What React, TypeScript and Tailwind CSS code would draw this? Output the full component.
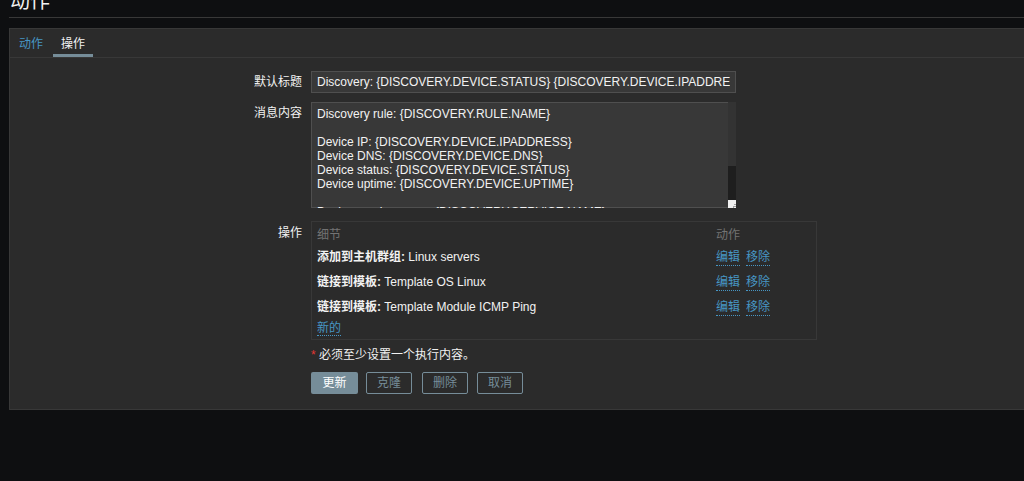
const FONT = "font-['Liberation_Sans','Noto_Sans_CJK_SC',sans-serif]";

const MESSAGE = [
  'Discovery rule: {DISCOVERY.RULE.NAME}',
  '',
  'Device IP: {DISCOVERY.DEVICE.IPADDRESS}',
  'Device DNS: {DISCOVERY.DEVICE.DNS}',
  'Device status: {DISCOVERY.DEVICE.STATUS}',
  'Device uptime: {DISCOVERY.DEVICE.UPTIME}',
  '',
  'Device service name: {DISCOVERY.SERVICE.NAME}',
  'Device service port: {DISCOVERY.SERVICE.PORT}',
];

const OPERATIONS = [
  { type: '添加到主机群组', value: 'Linux servers' },
  { type: '链接到模板', value: 'Template OS Linux' },
  { type: '链接到模板', value: 'Template Module ICMP Ping' },
];

function Link({ children }: { children: React.ReactNode }) {
  return (
    <span className="text-[#4796c4] border-b border-dotted border-[#4796c4] leading-[15px] cursor-pointer">
      {children}
    </span>
  );
}

function FormRow({ label, children, labelPad = 'pt-[4px]' }: { label: string; children: React.ReactNode; labelPad?: string }) {
  return (
    <div className="flex gap-[9px]">
      <div className={`w-[292px] shrink-0 text-right text-[#f2f2f2] ${labelPad}`}>{label}</div>
      {children}
    </div>
  );
}

export default function App() {
  return (
    <div className={`${FONT} text-[12px] leading-[14px] w-full h-screen bg-[#0e0f11] overflow-hidden`}>
      {/* page header */}
      <div className="ml-[9px] h-[18px] border-b border-[#383838] overflow-hidden">
        <h1 className="text-[20px] leading-[24px] text-[#f2f2f2] mt-[-11px] pl-[1px]">动作</h1>
      </div>

      {/* panel */}
      <div className="ml-[9px] mt-[10px] h-[382px] bg-[#2b2b2b] border border-[#383838] border-r-0">
        {/* tabs */}
        <div className="flex gap-[2px] pl-[1px] h-[29px] border-b border-[#383838]">
          <div className="px-2 pt-[8px] text-[#4796c4]">动作</div>
          <div className="px-2 pt-[8px] text-[#f2f2f2] border-b-[3px] border-[#768d99]">操作</div>
        </div>

        <div className="pt-[13px] flex flex-col">
          <FormRow label="默认标题">
            <div className="w-[425px] h-[22px] bg-[#383838] border border-[#4f4f4f] px-[5px] pt-[3px] text-[#f2f2f2]">
              <div className="whitespace-nowrap overflow-hidden">
                Discovery: {'{DISCOVERY.DEVICE.STATUS}'} {'{DISCOVERY.DEVICE.IPADDRESS}'}
              </div>
            </div>
          </FormRow>

          <div className="h-[9px]" />

          <FormRow label="消息内容" labelPad="pt-[4px]">
            <div className="w-[425px] h-[106px] flex">
              <div className="flex-1 bg-[#383838] shadow-[inset_1px_1px_0_#4f4f4f,inset_0_-1px_0_#4f4f4f] px-[6px] pt-[5px] text-[#f2f2f2] overflow-hidden">
                {MESSAGE.map((line, i) => (
                  <div key={i} className="h-[14px] whitespace-nowrap">{line}</div>
                ))}
              </div>
              <div className="w-[8px] flex flex-col">
                <div className="h-[64px] bg-[#333333]" />
                <div className="flex-1 bg-[#1e1e1e]" />
                <div className="h-[8px] bg-[#f0f0f0] flex items-end justify-end">
                  <svg width="5" height="5" viewBox="0 0 5 5">
                    <path d="M4 1v3H1" stroke="#555" strokeWidth="1" fill="none" strokeDasharray="1 1" />
                  </svg>
                </div>
              </div>
            </div>
          </FormRow>

          <div className="h-[13px]" />

          <FormRow label="操作" labelPad="pt-[5px]">
            <div className="w-[506px] h-[119px] border border-[#383838] px-[5px] pt-[6px]">
              <div className="flex text-[#737373] h-[14px]">
                <div className="w-[399px]">细节</div>
                <div>动作</div>
              </div>
              {OPERATIONS.map((op, i) => (
                <div key={i} className="flex items-start h-[25px] pt-[8px] text-[#f2f2f2]">
                  <div className="w-[399px]">
                    <span className="font-bold">{op.type}:</span> {op.value}
                  </div>
                  <div className="flex gap-[6px]">
                    <Link>编辑</Link>
                    <Link>移除</Link>
                  </div>
                </div>
              ))}
              <div className="pt-[4px]">
                <Link>新的</Link>
              </div>
            </div>
          </FormRow>

          <div className="ml-[301px] mt-[8px] text-[#f2f2f2] h-[14px]">
            <span className="text-[#e33734]">*</span> 必须至少设置一个执行内容。
          </div>

          <div className="ml-[301px] mt-[10px] flex gap-[9px]">
            <button className="h-[22px] w-[47px] bg-[#768d99] text-[#ffffff] rounded-[2px]">更新</button>
            <button className="h-[22px] w-[46px] border border-[#768d99] text-[#768d99] rounded-[2px] ml-[-1px]">克隆</button>
            <button className="h-[22px] w-[46px] border border-[#768d99] text-[#768d99] rounded-[2px] ml-[1px]">删除</button>
            <button className="h-[22px] w-[46px] border border-[#768d99] text-[#768d99] rounded-[2px]">取消</button>
          </div>
        </div>
      </div>
    </div>
  );
}
